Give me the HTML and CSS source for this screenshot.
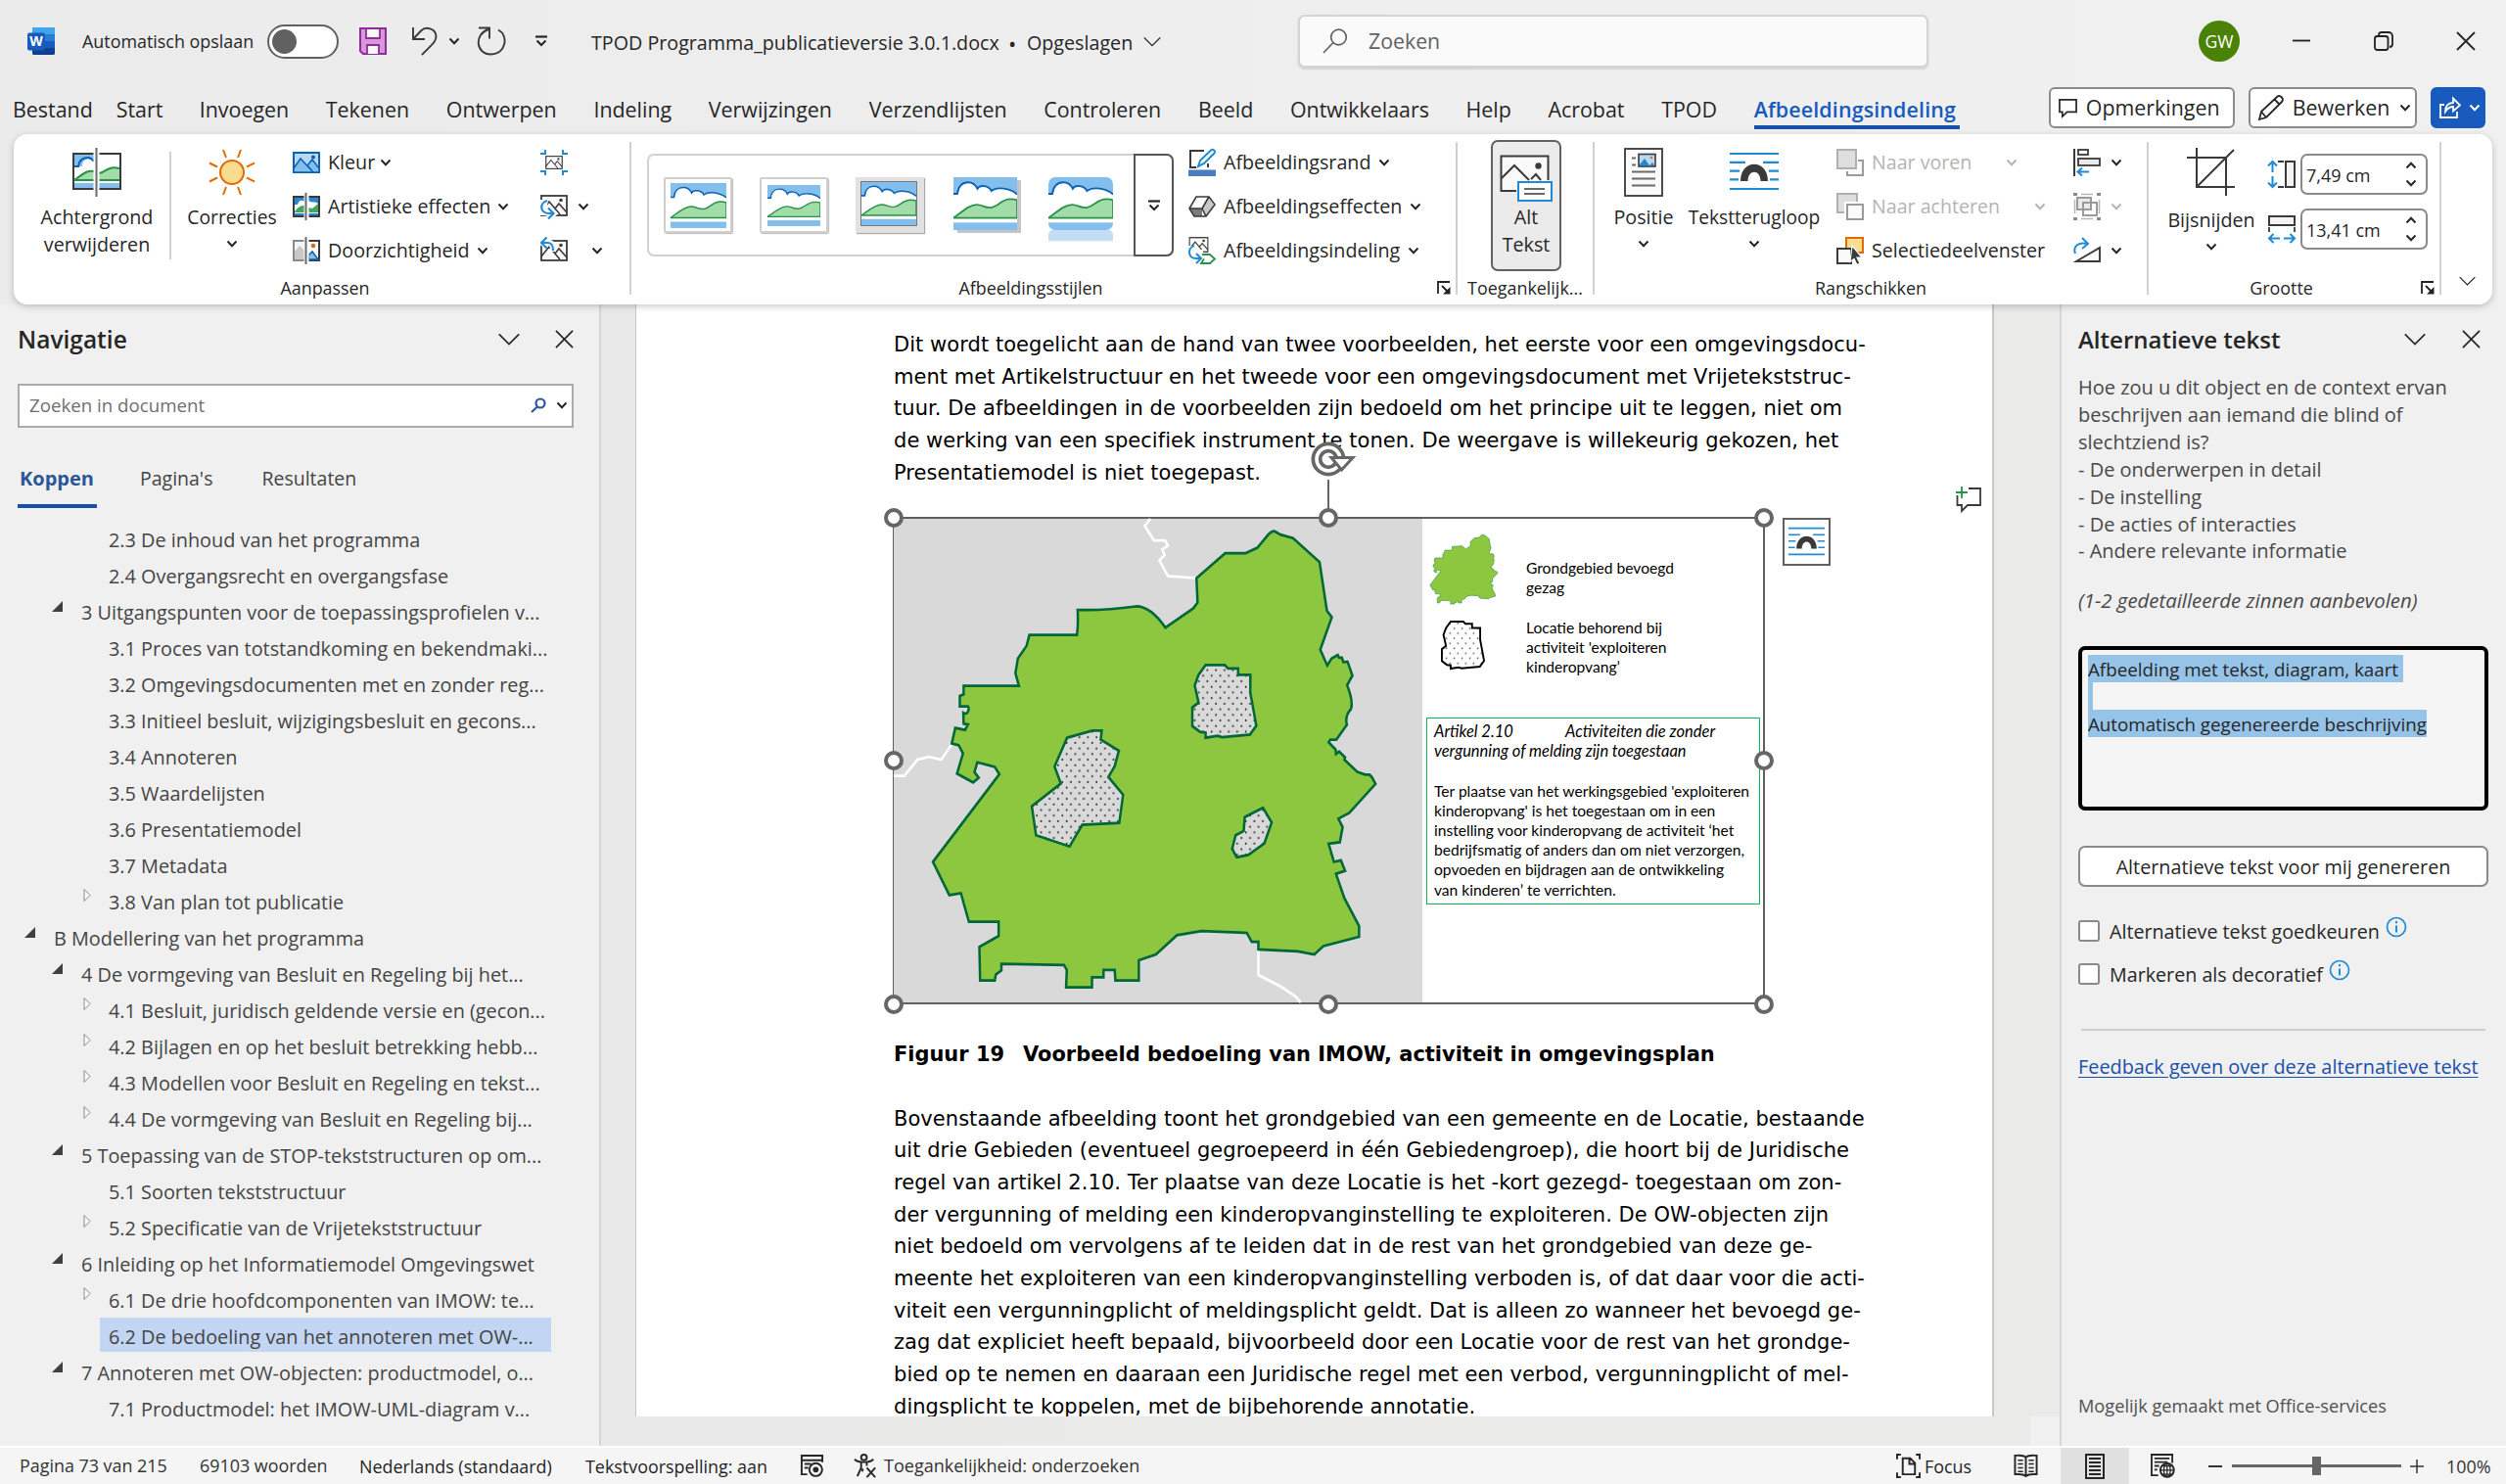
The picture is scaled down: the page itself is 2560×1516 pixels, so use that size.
FILE: index.html
```html
<!DOCTYPE html>
<html lang="nl">
<head>
<meta charset="utf-8">
<title>TPOD Programma_publicatieversie 3.0.1.docx - Word</title>
<link rel="stylesheet" href="styles.css">
</head>
<body>
<svg class="defs" aria-hidden="true">
  <defs>
    <pattern id="dots" width="24.4" height="29" patternUnits="userSpaceOnUse"><rect width="24.4" height="29" fill="#d9d9d9"/><circle cx="6" cy="7" r="2.5" fill="#222"/><circle cx="18.2" cy="21.5" r="2.5" fill="#222"/></pattern>
    <pattern id="dots-light" width="34" height="40" patternUnits="userSpaceOnUse"><rect width="34" height="40" fill="#fff"/><circle cx="8" cy="10" r="3.4" fill="#555"/><circle cx="25" cy="30" r="3.4" fill="#555"/></pattern>
  </defs>
  <symbol id="chev" viewBox="0 0 12 8"><path d="M1.5 1.5 6 6.2l4.500-4.700" fill="none" stroke="currentColor" stroke-width="2"/></symbol>
  <symbol id="chev-lg" viewBox="0 0 24 14"><path d="M1 1.500 12 12.500 23 1.500" fill="none" stroke="currentColor" stroke-width="1.800"/></symbol>
  <symbol id="cross" viewBox="0 0 20 20"><path d="M1 1 19 19M19 1 1 19" fill="none" stroke="currentColor" stroke-width="1.800"/></symbol>
  <symbol id="more" viewBox="0 0 14 12"><path d="M1 1.500h12" stroke="currentColor" stroke-width="2.200"/><path d="M2.500 5.500 7 10l4.500-4.500" fill="none" stroke="currentColor" stroke-width="2"/></symbol>
  <symbol id="launcher" viewBox="0 0 14 14"><path d="M1 13V1h12M5 5l7 7" fill="none" stroke="#222" stroke-width="1.800"/><path d="M13.500 6v7.500H6z" fill="#222"/></symbol>
  <symbol id="scene" viewBox="0 0 57 46" preserveAspectRatio="none">
    <rect width="57" height="46" fill="#fff"/>
    <path d="M0 0h57v15c-6-5.500-18-7-23-3-2.500-5-10.500-5.500-12.500-2C20 7 17.500 4.500 13 4.500 8 4.500 4 8 3.500 14.500H0z" fill="#83beec"/>
    <path d="M0 14.500h3.500C4 8 8 4.500 13 4.500c4.500 0 7 2.500 8.500 5.500 2-3.500 10-3 12.500 2 5-4 17-2.500 23 3" fill="none" stroke="#0b62b4" stroke-width="1.600"/>
    <path d="M0 35.500C8 30 14 24 21 24c5 0 7 3 13 2.500C41 25 43 19 51 19c3 0 5 .5 6 1v15.500z" fill="#a2dda9" stroke="#2a9246" stroke-width="1.500"/>
    <rect y="39.500" width="57" height="6.500" fill="#83beec"/>
  </symbol>
  <symbol id="wrap" viewBox="0 0 50 40"><g stroke="#1e8bd4" stroke-width="2.200" fill="none"><path d="M0 2h50M0 38h50M0 10.800h16M34 10.800h16M0 19.600h10M40 19.600h10M0 28.400h9M41 28.400h9"/></g><path d="M11 30c0-23 28-23 28 0h-7.500c0-12.500-13-12.500-13 0z" fill="#3a3a3a"/></symbol>
  <symbol id="mountain" viewBox="0 0 28 22"><rect x="1" y="1" width="26" height="20" fill="#fafafa" stroke="#3a3a3a" stroke-width="1.800"/><path d="M1 17 9 7l11 13M15 14l4-5 8 9" fill="none" stroke="#3a3a3a" stroke-width="1.600"/><circle cx="21" cy="5.500" r="1.800" fill="#3a3a3a"/></symbol>
  <symbol id="info" viewBox="0 0 22 22"><circle cx="11" cy="11" r="9.500" fill="none" stroke="#1e8bd4" stroke-width="1.700"/><path d="M11 9.500v7M11 5v2.200" stroke="#1e8bd4" stroke-width="2"/></symbol>
  <symbol id="closed" viewBox="0 0 8 15"><path d="M1 1.500v12l6-6z" fill="#fafafa" stroke="#8a8a8a"/></symbol>
  <symbol id="open" viewBox="0 0 11 11"><path d="M11 0v11H0z" fill="#404040"/></symbol>
  <path id="area" d="M1127 257 1142 265 1178 274 1254 336 1275 462 1289 479 1256 563 1276 604 1288 586 1306 577 1310 584 1318 584 1322 595 1334 594 1348 630 1333 655Q1352 700 1343 718 1326 735 1332 758L1302 796H1285L1280 803 1300 822 1301 833 1310 827 1327 842 1325 848 1362 880 1385 887H1397L1404 894 1414 911 1339 986 1308 1001 1320 1023 1312 1062 1280 1066 1295 1113 1315 1109 1327 1136 1301 1144 1325 1207 1367 1279V1307L1265 1331 1239 1353 1192 1345 1079 1340V1320H1060L1046 1297 916 1292 846 1303 786 1353 737 1368V1420H670L668 1393H636V1412H603V1438H529L531 1393 523 1380 344 1377V1394L328 1405 325 1420H283L281 1333 336 1305V1268H251L228 1194 195 1199 148 1113 338 886 325 867 275 855 267 880 279 895 263 907 217 884 234 832 222 811 202 806 212 766 240 771 248 757 236 755 235 727C250 735 253 712 248 710H225V683L236 679V657H394L384 624 391 586 416 553 424 525H560Q564 500 562 460 640 462 728 451 770 450 813 506L893 456 905 441 902 378 984 313H1043L1076 299 1108 264Q1120 254 1127 257Z"/>
  <path id="location" d="M928 603H983L992 612H1021V628H1056V675L1073 760 1055 783 975 790 963 786 928 791V778L912 776 890 761V713L908 700 897 656 908 628Z"/>
</svg>

<header class="titlebar">
  <svg class="word-logo" viewBox="0 0 28 28"><rect x="5" width="23" height="28" rx="2" fill="#185abd"/><path d="M5 7V2a2 2 0 0 1 2-2h19a2 2 0 0 1 2 2v5z" fill="#41a5ee"/><path d="M5 7h23v7H5z" fill="#2b7cd3"/><path d="M5 21h23v5a2 2 0 0 1-2 2H7a2 2 0 0 1-2-2z" fill="#103f91"/><rect y="5.500" width="18" height="18" rx="2" fill="#185abd"/><text x="9" y="19" text-anchor="middle" class="word-letter">W</text></svg>
  <span class="autosave">Automatisch opslaan</span>
  <span class="toggle"><i></i></span>
  <svg class="save" viewBox="0 0 28 28"><path d="M1 1h26v26H4l-3-3z" fill="#d897db" stroke="#8f2c9c" stroke-width="2"/><path d="M7 1h14v10H7zM8 27v-9h12v9" fill="#fafafa" stroke="#8f2c9c" stroke-width="1.800"/></svg>
  <svg class="undo" viewBox="0 0 28 30"><path d="M2 1v12h12M2.500 12.500 10 4.500C15-.5 25 2 25.500 10c0 6-4 8-14.500 19" fill="none" stroke="#3a3a3a" stroke-width="1.900"/></svg>
  <svg class="chev undo-more"><use href="#chev"/></svg>
  <svg class="redo" viewBox="0 0 30 30"><path d="M2 1.500h11v11M12 3C-3 8-1 28.500 14.500 28.500 30 28.500 33 9 22 3.500" fill="none" stroke="#3a3a3a" stroke-width="1.900"/></svg>
  <svg class="customize"><use href="#more"/></svg>
  <span class="doc-name">TPOD Programma_publicatieversie 3.0.1.docx</span>
  <span class="bullet">•</span>
  <span class="doc-state">Opgeslagen</span>
  <svg class="state-chev"><use href="#chev-lg"/></svg>
  <div class="search"><svg viewBox="0 0 26 26"><circle cx="16.500" cy="9" r="7.800"/><path d="M11 14.500 1 25"/></svg>Zoeken</div>
  <span class="avatar">GW</span>
  <svg class="win min" viewBox="0 0 20 20"><path d="M1 9.500h18"/></svg>
  <svg class="win max" viewBox="0 0 20 20"><rect x="1" y="5" width="13.500" height="14" rx="2.500"/><path d="M5 5V4a3 3 0 0 1 3-3h7a4 4 0 0 1 4 4v8a3 3 0 0 1-3 3"/></svg>
  <svg class="win"><use href="#cross"/></svg>
</header>

<nav class="tabs">
  <span>Bestand</span><span class="start">Start</span>
  <div class="tab-list"><span>Invoegen</span><span>Tekenen</span><span>Ontwerpen</span><span>Indeling</span><span>Verwijzingen</span><span>Verzendlijsten</span><span>Controleren</span><span>Beeld</span><span>Ontwikkelaars</span><span>Help</span><span>Acrobat</span><span>TPOD</span><span class="active">Afbeeldingsindeling</span></div>
  <span class="btn comments"><svg viewBox="0 0 20 20"><path d="M1 1h18v13H9l-5 5v-5H1z"/></svg>Opmerkingen</span>
  <span class="btn edit"><svg viewBox="0 0 28 28"><path d="M2 26 4 18 20 3c3-3 8 2 5 5L9 24zM4 18l5 6M17.500 5.500l5 5"/></svg>Bewerken<svg class="chev"><use href="#chev"/></svg></span>
  <span class="btn share"><svg viewBox="0 0 22 22"><path d="M5 8H1v13h17v-6M6 15c0-6 3-9 8-9V1.500L21 8.500l-7 6V10c-4 0-6 2-8 5z"/></svg><svg class="chev"><use href="#chev"/></svg></span>
</nav>

<section class="ribbon">
  <div class="group g-adjust">
    <div class="group-body">
      <div class="big remove-bg"><svg viewBox="0 0 50 50"><rect x="1" y="6" width="48" height="36" fill="#fff" stroke="#3a3a3a" stroke-width="2"/><path d="M2 7h21v8c-5-6-13-4-13 4H2zM2 36h46v5H2z" fill="#83beec"/><path d="M2 19h4c1-9 11-12 16-5" fill="none" stroke="#0b62b4" stroke-width="2"/><path d="M2 33C14 24 16 23 23 24v9zM27 26c7-1 9-6 21-5v12H27z" fill="#a2dda9"/><path d="M2 33C14 24 16 23 23 24M2 33h46M27 26c7-1 9-8 21-5" fill="none" stroke="#2a9246" stroke-width="2"/><path d="M24.500 0v50" stroke="#fff" stroke-width="6"/><path d="M24.500 0v50" stroke="#6a6a6a" stroke-width="2"/></svg>Achtergrond<br>verwijderen</div>
      <i class="inner-sep"></i>
      <div class="big corrections"><svg viewBox="0 0 50 50"><circle cx="25" cy="25" r="12" fill="#f9dc8f" stroke="#e06c00" stroke-width="2"/><path d="M16 2l3 8M34 2l-3 8M16 48l3-8M34 48l-3-8M2 15.500l8 4M48 15.500l-8 4M2 34.500l8-4M48 34.500l-8-4" stroke="#e06c00" stroke-width="2"/></svg>Correcties<svg class="chev"><use href="#chev"/></svg></div>
      <div class="rows adjust-rows">
        <div><svg class="ic" viewBox="0 0 28 28"><rect x="1" y="4" width="26" height="20" fill="#b9d8f3" stroke="#0b62b4" stroke-width="2"/><path d="M1 20 8 10l13 14H1zM15 17l5-6 7 9v4h-6z" fill="#83beec" stroke="#0b62b4" stroke-width="1.500"/><circle cx="21" cy="8.500" r="2" fill="#0b62b4"/></svg>Kleur<svg class="chev"><use href="#chev"/></svg></div>
        <div><svg class="ic" viewBox="0 0 28 28"><rect x="1" y="4" width="26" height="20" fill="#fff" stroke="#3a3a3a" stroke-width="2"/><path d="M2 5h10v4c-4-3-6 0-7 3H2zM16 5h10v6c-3-3-6 0-10-3zM2 21h24v2H2z" fill="#2a86d1"/><path d="M2 19c4-5 6-6 10-6v7H2zM16 15l4 1 6-5v9H16z" fill="#3fa85b"/><path d="M14 0v28" stroke="#fff" stroke-width="5"/><path d="M13.500 0v28" stroke="#6a6a6a" stroke-width="2"/></svg>Artistieke effecten<svg class="chev"><use href="#chev"/></svg></div>
        <div><svg class="ic" viewBox="0 0 28 28"><path d="M1 4h12v20H1z" fill="#f3f3f3" stroke="#8a8a8a" stroke-width="2"/><path d="M2 15 7 9l6 6v8H2z" fill="#c8c8c8"/><path d="M14 4h13v20H14z" fill="#fff" stroke="#3a3a3a" stroke-width="2"/><circle cx="21" cy="9" r="2.300" fill="#e06c00"/><path d="M16 19l4-4 6 8H16z" fill="#83beec" stroke="#0b62b4" stroke-width="1.500"/><path d="M14 0v28" stroke="#fff" stroke-width="5"/><path d="M13.500 0v28" stroke="#6a6a6a" stroke-width="2"/></svg>Doorzichtigheid<svg class="chev"><use href="#chev"/></svg></div>
      </div>
      <div class="rows">
        <div><svg class="ic" viewBox="0 0 28 28"><svg x="5" y="7" width="18" height="14" viewBox="0 0 28 22"><use href="#mountain"/></svg><path d="M5 1v4H0M23 1v4h5M5 27v-4H0M23 27v-4h5" fill="none" stroke="#1e8bd4" stroke-width="2"/></svg></div>
        <div><svg class="ic" viewBox="0 0 28 28"><svg y="2" width="28" height="22" viewBox="0 0 28 22"><use href="#mountain"/></svg><path d="M0 7h7v16H0z" fill="#fff"/><path d="M7 8C-1 10-1 21 9 21h4M8 15l6 6-6 6" fill="none" stroke="#fff" stroke-width="6"/><path d="M7 8C-1 10-1 21 9 21h4M8 15.500l5.500 5.500L8 26.500" fill="none" stroke="#1e8bd4" stroke-width="2.200"/></svg><svg class="chev"><use href="#chev"/></svg></div>
        <div class="reset"><svg class="ic" viewBox="0 0 28 28"><svg y="3" width="28" height="22" viewBox="0 0 28 22"><use href="#mountain"/></svg><path d="M0 5h6c7 0 7 5 7 10M6 0 1 5l5 5" fill="none" stroke="#fff" stroke-width="6"/><path d="M1 6h6c6 0 6 5 6 8M6.500.5 1 6l5.500 5.500" fill="none" stroke="#1e8bd4" stroke-width="2.200"/></svg><svg class="chev"><use href="#chev"/></svg></div>
      </div>
    </div>
    <div class="group-label"><span>Aanpassen</span></div>
  </div>
  <i class="sep"></i>
  <div class="group g-styles">
    <div class="group-body">
      <div class="gallery">
        <div class="thumbs">
          <span class="thumb framed"><svg><use href="#scene"/></svg></span>
          <span class="thumb framed matte"><svg><use href="#scene"/></svg></span>
          <span class="thumb metal"><svg><use href="#scene"/></svg></span>
          <span class="thumb shadow"><svg><use href="#scene"/></svg></span>
          <span class="thumb mirror"><svg><use href="#scene"/></svg></span>
        </div>
        <span class="gallery-more"><svg><use href="#more"/></svg></span>
      </div>
      <div class="rows style-rows">
        <div><svg class="ic" viewBox="0 0 28 28"><path d="M16 2H2v17h6M20 15v4" fill="none" stroke="#3a3a3a" stroke-width="2"/><path d="M10 18l2-6L23 1.500c2-2 5 1 3.500 3L16 15z" fill="#fafafa" stroke="#1e8bd4" stroke-width="2"/><rect y="21.500" width="28" height="6.500" fill="#4a7dbf"/></svg>Afbeeldingsrand<svg class="chev"><use href="#chev"/></svg></div>
        <div><svg class="ic" viewBox="0 0 28 28"><path d="M8 4h12l-6 12H2z" fill="#fafafa"/><path d="M2 16h12v8H6z" fill="#7a7a7a"/><path d="M20 4l6 9-9 11-3-8z" fill="#c8c8c8"/><path d="M8 4h13l6 8-9 12H6l-5-8zM1 16h13l4 8M14 16l7-12" fill="none" stroke="#3a3a3a" stroke-width="1.600"/></svg>Afbeeldingseffecten<svg class="chev"><use href="#chev"/></svg></div>
        <div><svg class="ic" viewBox="0 0 28 28"><svg y="0" width="21" height="16" viewBox="0 0 28 22"><use href="#mountain"/></svg><path d="M0 9h7v14H0zM5 13h10v14H5z" fill="#fff"/><path d="M6 9C-1 11-1 22 8 22h4M8 17l5 5-5 5" fill="none" stroke="#1e8bd4" stroke-width="2"/><path d="M14 18h8l5 4.500-5 4.500h-9l3-4.500" fill="#fff" stroke="#2a9246" stroke-width="1.800"/></svg>Afbeeldingsindeling<svg class="chev"><use href="#chev"/></svg></div>
      </div>
    </div>
    <div class="group-label"><span>Afbeeldingsstijlen</span><svg class="launcher"><use href="#launcher"/></svg></div>
  </div>
  <i class="sep"></i>
  <div class="group g-access">
    <div class="group-body">
      <div class="big alt"><svg viewBox="0 0 54 50"><path d="M17 37H1.500V1.500h48V26" fill="#fafafa" stroke="#3a3a3a" stroke-width="2"/><path d="M2 24l13-13 15 15M32 25l5-5 5 6" fill="none" stroke="#3a3a3a" stroke-width="2"/><circle cx="39.500" cy="11.500" r="3.200" fill="#3a3a3a"/><rect x="19" y="28" width="34" height="19" fill="#fff" stroke="#1e8bd4" stroke-width="2"/><path d="M25 35h21M25 40h21" stroke="#6a6a6a" stroke-width="1.800"/></svg>Alt<br>Tekst</div>
    </div>
    <div class="group-label"><span>Toegankelijk...</span></div>
  </div>
  <i class="sep"></i>
  <div class="group g-arrange">
    <div class="group-body">
      <div class="big position"><svg viewBox="0 0 50 50"><rect x="6" y="1" width="38" height="48" fill="#fafafa" stroke="#3a3a3a" stroke-width="1.800"/><path d="M13 10.500h4M13 17.500h4M13 24.500h24M13 31.500h24M13 38.500h24" stroke="#6a6a6a" stroke-width="1.800"/><rect x="20" y="6.500" width="17" height="12.500" fill="#b9d8f3" stroke="#3a3a3a" stroke-width="1.600"/><path d="M21 17l5-6 5 7 3-3 2 3H21z" fill="#1e8bd4"/><circle cx="33" cy="10" r="1.200" fill="#e06c00"/></svg>Positie<svg class="chev"><use href="#chev"/></svg></div>
      <div class="big wrapping"><svg viewBox="0 0 50 50"><svg y="4" width="50" height="40"><use href="#wrap"/></svg></svg>Tekstterugloop<svg class="chev"><use href="#chev"/></svg></div>
      <div class="rows order-rows">
        <div class="off"><svg class="ic" viewBox="0 0 28 28"><path d="M11 23v4h16V12h-5" fill="#fafafa" stroke="#9a9a9a" stroke-width="2"/><rect x="1" y="1" width="19" height="19" fill="#dedede" stroke="#b0b0b0" stroke-width="2"/></svg>Naar voren<svg class="chev"><use href="#chev"/></svg></div>
        <div class="off"><svg class="ic" viewBox="0 0 28 28"><rect x="1" y="1" width="20" height="19" fill="#dedede" stroke="#b0b0b0" stroke-width="2"/><rect x="8" y="9" width="20" height="19" fill="#fff"/><rect x="11" y="12" width="16" height="15" fill="#fafafa" stroke="#9a9a9a" stroke-width="2"/></svg>Naar achteren<svg class="chev"><use href="#chev"/></svg></div>
        <div><svg class="ic" viewBox="0 0 28 28"><rect x="10" y="1" width="17" height="15" fill="#f9dc8f" stroke="#e06c00" stroke-width="2"/><rect x="1" y="12" width="14" height="15" fill="#fafafa" stroke="#3a3a3a" stroke-width="2"/><path d="M16 9l10 12h-5l3 6-3 1.500-3-6-4 3z" fill="#3a3a3a" stroke="#fff" stroke-width="1.200"/></svg>Selectiedeelvenster</div>
      </div>
      <div class="rows icon-rows">
        <div><svg class="ic" viewBox="0 0 28 28"><path d="M1 0v28" stroke="#3a3a3a" stroke-width="2"/><rect x="5" y="1" width="10" height="5" fill="#fafafa" stroke="#3a3a3a" stroke-width="1.800"/><rect x="5" y="10" width="22" height="7" fill="#eaeaea" stroke="#3a3a3a" stroke-width="1.800"/><path d="M16 23.500H5M9 19.500l-4.500 4 4.500 4" fill="none" stroke="#1e8bd4" stroke-width="2"/></svg><svg class="chev"><use href="#chev"/></svg></div>
        <div class="off"><svg class="ic" viewBox="0 0 28 28"><path d="M0 1.500h4M24 1.500h4M0 26.500h4M24 26.500h4" stroke="#8a8a8a" stroke-width="3"/><path d="M8 1.500h12M8 26.500h12M1.500 7v14M26.500 7v14" stroke="#b8b8b8" stroke-width="1.500"/><rect x="4" y="5" width="14" height="12" fill="#eaeaea" stroke="#9a9a9a" stroke-width="2"/><rect x="10" y="10" width="14" height="13" fill="none" stroke="#9a9a9a" stroke-width="2"/></svg><svg class="chev"><use href="#chev"/></svg></div>
        <div><svg class="ic" viewBox="0 0 28 28"><path d="M27 11v14H3z" fill="#fafafa" stroke="#3a3a3a" stroke-width="1.900"/><path d="M2 17C-1 9 6 5 14 7M9 1l6 6-6 5" fill="none" stroke="#1e8bd4" stroke-width="2"/></svg><svg class="chev"><use href="#chev"/></svg></div>
      </div>
    </div>
    <div class="group-label"><span>Rangschikken</span></div>
  </div>
  <i class="sep"></i>
  <div class="group g-size">
    <div class="group-body">
      <div class="big crop"><svg viewBox="0 0 50 50"><path d="M10 0v40h39M0 10h40v39M10 40 48 2" fill="none" stroke="#3a3a3a" stroke-width="2"/></svg><span>Bijsnijden</span><svg class="chev"><use href="#chev"/></svg></div>
      <div class="fields">
        <div><svg class="ic" viewBox="0 0 28 28"><path d="M4.500 1v11M4.500 16v11M0 5.500 4.500 1 9 5.500M0 22.500 4.500 27 9 22.500" fill="none" stroke="#1e8bd4" stroke-width="2"/><rect x="18" y="1" width="9" height="26" fill="#f3f3f3" stroke="#3a3a3a" stroke-width="2"/><path d="M10 1h6M10 27h6" stroke="#3a3a3a" stroke-width="1.800"/></svg><span class="field">7,49 cm<b><svg class="chev up"><use href="#chev"/></svg><svg class="chev"><use href="#chev"/></svg></b></span></div>
        <div><svg class="ic" viewBox="0 0 28 28"><rect x="1" y="1" width="26" height="9" fill="#f3f3f3" stroke="#3a3a3a" stroke-width="2"/><path d="M1 12v5M27 12v5" stroke="#3a3a3a" stroke-width="1.800"/><path d="M1 23.500h11M16 23.500h11M5.500 19 1 23.500 5.500 28M22.500 19l4.500 4.500-4.500 4.500" fill="none" stroke="#1e8bd4" stroke-width="2"/></svg><span class="field">13,41 cm<b><svg class="chev up"><use href="#chev"/></svg><svg class="chev"><use href="#chev"/></svg></b></span></div>
      </div>
    </div>
    <div class="group-label"><span>Grootte</span><svg class="launcher"><use href="#launcher"/></svg></div>
  </div>
  <i class="sep"></i>
  <svg class="collapse"><use href="#chev-lg"/></svg>
</section>

<main class="workspace">
  <aside class="navpane">
    <div class="pane-head"><h2>Navigatie</h2><svg class="pane-chev"><use href="#chev-lg"/></svg><svg class="pane-close"><use href="#cross"/></svg></div>
    <div class="nav-search"><span>Zoeken in document</span><svg class="mag" viewBox="0 0 16 16"><circle cx="10" cy="6" r="4.500"/><path d="M7 9.500 1 15"/></svg><svg class="chev"><use href="#chev"/></svg></div>
    <div class="nav-tabs"><span class="active">Koppen</span><span>Pagina's</span><span>Resultaten</span></div>
    <ul class="tree">
      <li class="l3">2.3 De inhoud van het programma</li>
      <li class="l3">2.4 Overgangsrecht en overgangsfase</li>
      <li class="l2"><svg class="open"><use href="#open"/></svg>3 Uitgangspunten voor de toepassingsprofielen v...</li>
      <li class="l3">3.1 Proces van totstandkoming en bekendmaki...</li>
      <li class="l3">3.2 Omgevingsdocumenten met en zonder reg...</li>
      <li class="l3">3.3 Initieel besluit, wijzigingsbesluit en gecons...</li>
      <li class="l3">3.4 Annoteren</li>
      <li class="l3">3.5 Waardelijsten</li>
      <li class="l3">3.6 Presentatiemodel</li>
      <li class="l3">3.7 Metadata</li>
      <li class="l3"><svg class="closed"><use href="#closed"/></svg>3.8 Van plan tot publicatie</li>
      <li class="l1"><svg class="open"><use href="#open"/></svg>B Modellering van het programma</li>
      <li class="l2"><svg class="open"><use href="#open"/></svg>4 De vormgeving van Besluit en Regeling bij het...</li>
      <li class="l3"><svg class="closed"><use href="#closed"/></svg>4.1 Besluit, juridisch geldende versie en (gecon...</li>
      <li class="l3"><svg class="closed"><use href="#closed"/></svg>4.2 Bijlagen en op het besluit betrekking hebb...</li>
      <li class="l3"><svg class="closed"><use href="#closed"/></svg>4.3 Modellen voor Besluit en Regeling en tekst...</li>
      <li class="l3"><svg class="closed"><use href="#closed"/></svg>4.4 De vormgeving van Besluit en Regeling bij...</li>
      <li class="l2"><svg class="open"><use href="#open"/></svg>5 Toepassing van de STOP-tekststructuren op om...</li>
      <li class="l3">5.1 Soorten tekststructuur</li>
      <li class="l3"><svg class="closed"><use href="#closed"/></svg>5.2 Specificatie van de Vrijetekststructuur</li>
      <li class="l2"><svg class="open"><use href="#open"/></svg>6 Inleiding op het Informatiemodel Omgevingswet</li>
      <li class="l3"><svg class="closed"><use href="#closed"/></svg>6.1 De drie hoofdcomponenten van IMOW: te...</li>
      <li class="l3 selected">6.2 De bedoeling van het annoteren met OW-...</li>
      <li class="l2"><svg class="open"><use href="#open"/></svg>7 Annoteren met OW-objecten: productmodel, o...</li>
      <li class="l3">7.1 Productmodel: het IMOW-UML-diagram v...</li>
    </ul>
  </aside>

  <div class="canvas">
    <article class="page">
      <p>Dit wordt toegelicht aan de hand van twee voorbeelden, het eerste voor een omgevingsdocu-<br>ment met Artikelstructuur en het tweede voor een omgevingsdocument met Vrijetekststruc-<br>tuur. De afbeeldingen in de voorbeelden zijn bedoeld om het principe uit te leggen, niet om<br>de werking van een specifiek instrument te tonen. De weergave is willekeurig gekozen, het<br>Presentatiemodel is niet toegepast.</p>
      <figure class="figure">
        <svg class="map" viewBox="36 224 1512 1253" preserveAspectRatio="none">
          <rect x="36" y="224" width="1512" height="1253" fill="#d9d9d9"/>
          <g class="roads"><path d="M770 224 754 242 780 280H812L820 294 804 303 811 318 796 332 820 372 902 378"/><path d="M36 890H66L104 848 137 841 172 848 202 808"/><path d="M1079 1340V1406L1143 1436 1184 1461 1200 1477"/></g>
          <use class="area" href="#area"/>
          <use class="spot" href="#location"/>
          <path class="spot" d="M532 791 604 773H631L628 796 680 825 668 865 650 893 692 939 681 1012 575 1017 539 1073 443 1044 431 969 514 910 496 866Z"/>
          <path class="spot" d="M1092 973 1117 1011 1096 1065 1050 1095 1017 1101 1004 1079 1014 1044 1037 1033 1040 997Z"/>
        </svg>
        <div class="legend">
          <div class="legend-row"><svg class="mini-area" viewBox="148 257 1266 1181" preserveAspectRatio="none"><use href="#area"/></svg><span>Grondgebied bevoegd<br>gezag</span></div>
          <div class="legend-row second"><svg class="mini-spot" viewBox="886 599 191 196" preserveAspectRatio="none"><use href="#location"/></svg><span>Locatie behorend bij<br>activiteit 'exploiteren<br>kinderopvang’</span></div>
          <div class="rule"><em><span class="art">Artikel 2.10</span>Activiteiten die zonder<br>vergunning of melding zijn toegestaan</em><br><br>Ter plaatse van het werkingsgebied 'exploiteren<br>kinderopvang' is het toegestaan om in een<br>instelling voor kinderopvang de activiteit ‘het<br>bedrijfsmatig of anders dan om niet verzorgen,<br>opvoeden en bijdragen aan de ontwikkeling<br>van kinderen’ te verrichten.</div>
        </div>
        <i class="stem"></i>
        <svg class="rotate" viewBox="0 0 46 36"><circle cx="19" cy="17" r="12" fill="none" stroke="#666" stroke-width="11"/><circle cx="19" cy="17" r="12" fill="none" stroke="#fff" stroke-width="3.600"/><path d="M22 15.500h22L32.500 28z" fill="#fff" stroke="#666" stroke-width="3"/></svg>
        <i class="handle tl"></i><i class="handle tc"></i><i class="handle tr"></i><i class="handle ml"></i><i class="handle mr"></i><i class="handle bl"></i><i class="handle bc"></i><i class="handle br"></i>
        <span class="layout-btn"><svg><use href="#wrap"/></svg></span>
        <svg class="add-comment" viewBox="0 0 26 26"><path d="M13 2h12v17H12l-6 6v-6H1.500V9" fill="none" stroke="#3a3a3a" stroke-width="1.800"/><path d="M6 0v12M0 6h12" stroke="#2a9246" stroke-width="1.800"/></svg>
      </figure>
      <h3><span>Figuur 19</span>Voorbeeld bedoeling van IMOW, activiteit in omgevingsplan</h3>
      <p class="after">Bovenstaande afbeelding toont het grondgebied van een gemeente en de Locatie, bestaande<br>uit drie Gebieden (eventueel gegroepeerd in één Gebiedengroep), die hoort bij de Juridische<br>regel van artikel 2.10. Ter plaatse van deze Locatie is het -kort gezegd- toegestaan om zon-<br>der vergunning of melding een kinderopvanginstelling te exploiteren. De OW-objecten zijn<br>niet bedoeld om vervolgens af te leiden dat in de rest van het grondgebied van deze ge-<br>meente het exploiteren van een kinderopvanginstelling verboden is, of dat daar voor die acti-<br>viteit een vergunningplicht of meldingsplicht geldt. Dat is alleen zo wanneer het bevoegd ge-<br>zag dat expliciet heeft bepaald, bijvoorbeeld door een Locatie voor de rest van het grondge-<br>bied op te nemen en daaraan een Juridische regel met een verbod, vergunningplicht of mel-<br>dingsplicht te koppelen, met de bijbehorende annotatie.</p>
    </article>
    <i class="corner"></i>
  </div>

  <aside class="altpane">
    <div class="pane-head"><h2>Alternatieve tekst</h2><svg class="pane-chev"><use href="#chev-lg"/></svg><svg class="pane-close"><use href="#cross"/></svg></div>
    <p class="question">Hoe zou u dit object en de context ervan<br>beschrijven aan iemand die blind of<br>slechtziend is?<br>- De onderwerpen in detail<br>- De instelling<br>- De acties of interacties<br>- Andere relevante informatie</p>
    <p class="hint">(1-2 gedetailleerde zinnen aanbevolen)</p>
    <div class="alt-box"><mark>Afbeelding met tekst, diagram, kaart&nbsp;</mark><mark class="blank"></mark><mark>Automatisch gegenereerde beschrijving</mark></div>
    <div class="generate">Alternatieve tekst voor mij genereren</div>
    <div class="check"><i></i>Alternatieve tekst goedkeuren<svg><use href="#info"/></svg></div>
    <div class="check"><i></i>Markeren als decoratief<svg><use href="#info"/></svg></div>
    <hr>
    <a class="feedback">Feedback geven over deze alternatieve tekst</a>
    <div class="powered">Mogelijk gemaakt met Office-services</div>
  </aside>
</main>

<footer class="status">
  <span class="s-page">Pagina 73 van 215</span>
  <span class="s-words">69103 woorden</span>
  <span class="s-lang">Nederlands (standaard)</span>
  <span class="s-pred">Tekstvoorspelling: aan</span>
  <svg class="s-icon s-macro" viewBox="0 0 26 26"><path d="M8 22H2V2h22v7M2 7h22M5 11h7M5 15h4" fill="none" stroke="#262626" stroke-width="2"/><circle cx="17" cy="17" r="6.800" fill="none" stroke="#262626" stroke-width="2"/><circle cx="17" cy="17" r="3" fill="#262626"/></svg>
  <svg class="s-icon s-access" viewBox="0 0 26 26"><circle cx="11" cy="4" r="3" fill="none" stroke="#262626" stroke-width="2"/><path d="M1 6c4 4 16 4 20 0M8 9v6l-4 9M14 9v4M10 16l-1 3M14 15l9 10M23 15l-9 10" fill="none" stroke="#262626" stroke-width="2"/></svg>
  <span class="s-check">Toegankelijkheid: onderzoeken</span>
  <svg class="s-icon s-focus" viewBox="0 0 26 26"><path d="M5 1H1v5M21 1h4v5M5 25H1v-5M21 25h4v-5M7 5h8l5 5v12H7zM14 5v6h6" fill="none" stroke="#262626" stroke-width="2"/></svg>
  <span class="s-focus-label">Focus</span>
  <svg class="s-icon s-read" viewBox="0 0 26 26"><path d="M13 4C10 1 5 2 1.500 2v20c4 0 8-1 11.500 2 3.500-3 7.500-2 11.500-2V2C21 2 16 1 13 4zM13 4v19" fill="none" stroke="#262626" stroke-width="2"/><path d="M4.500 7H10M4.500 11H10M4.500 15H10M4.500 19H10M16 7h5.500M16 11h5.500M16 15h5.500M16 19h5.500" stroke="#262626" stroke-width="1.600"/></svg>
  <span class="s-print"><svg viewBox="0 0 20 26"><rect x="1" y="1" width="18" height="24" fill="none" stroke="#262626" stroke-width="2"/><path d="M4 5h12M4 9h12M4 13h12M4 17h12M4 21h12" stroke="#262626" stroke-width="1.900"/></svg></span>
  <svg class="s-icon s-web" viewBox="0 0 26 26"><path d="M8 23H1V1h22v9M4 5h16M4 9h14M4 13h5M4 17h3" fill="none" stroke="#262626" stroke-width="1.900"/><circle cx="17.500" cy="17.500" r="7.200" fill="none" stroke="#262626" stroke-width="2"/><path d="M10 17.500h15M17.500 10v15M12 13h11M12 22h11" stroke="#262626" stroke-width="1.300"/><ellipse cx="17.500" cy="17.500" rx="3.500" ry="7.200" fill="none" stroke="#262626" stroke-width="1.300"/></svg>
  <i class="minus"></i>
  <i class="slider"><b></b></i>
  <svg class="plus" viewBox="0 0 14 14"><path d="M7 0v14M0 7h14" stroke="#333" stroke-width="1.500"/></svg>
  <span class="s-zoom">100%</span>
</footer>
</body>
</html>
```
FILE: styles.css
```css
* { box-sizing: border-box; }
body { margin: 0; width: 2560px; height: 1516px; overflow: hidden; display: flex; flex-direction: column; background: linear-gradient(90deg, #ebebeb, #efefef 60%, #f0f0f0); font-family: "Open Sans", "Noto Sans", sans-serif; color: #262626; white-space: nowrap; }
svg { display: block; flex: none; overflow: visible; }
.defs { position: absolute; width: 0; height: 0; }
.chev { width: 12px; height: 8px; }

/* Title bar */
.titlebar { height: 84px; display: flex; align-items: center; padding-left: 28px; font-size: 19.7px; }
.titlebar > * { flex: none; }
.word-logo { width: 28px; height: 28px; }
.word-letter { font: 700 14px "Open Sans", sans-serif; fill: #fff; }
.autosave { font-size: 17.9px; margin-left: 28px; width: 189px; }
.toggle { width: 73px; height: 35px; border: 2px solid #616161; border-radius: 18px; background: #fff; padding: 3px; }
.toggle i { display: block; width: 25px; height: 25px; border-radius: 50%; background: #616161; }
.save { width: 28px; height: 28px; margin-left: 21px; }
.undo { width: 28px; height: 30px; margin-left: 25px; }
.undo-more { margin-left: 10px; }
.redo { width: 30px; height: 30px; margin-left: 17px; }
.customize { width: 14px; height: 12px; margin-left: 29px; }
.doc-name { margin-left: 44px; width: 418px; padding-top: 3px; }
.bullet { margin: 3px 0 0 8px; width: 19px; font-size: 22px; }
.doc-state { width: 112px; padding-top: 3px; }
.state-chev { width: 18px; height: 11px; margin-left: 7px; }
.search { margin-left: 140px; width: 644px; height: 55px; background: #fafafa; border: 2px solid #d4d4d4; border-bottom-width: 3px; border-radius: 7px; box-shadow: 0 1px 2px rgba(0,0,0,.12); display: flex; align-items: center; padding-left: 23px; font-size: 21.3px; color: #616161; }
.search svg { width: 26px; height: 26px; margin-right: 21px; fill: none; stroke: #616161; stroke-width: 1.7; }
.avatar { margin-left: 276px; width: 42px; height: 42px; border-radius: 50%; background: #498205; color: #fff; font-size: 17.5px; line-height: 42px; text-align: center; }
.win { width: 20px; height: 20px; margin-left: 64px; fill: none; stroke: #222; stroke-width: 1.8; }
.min { margin-left: 53px; }

/* Tabs */
.tabs { height: 53px; display: flex; align-items: flex-start; padding: 5px 0 0 13px; font-size: 21.4px; line-height: 45px; }
.tabs > .start { margin-left: 24px; width: 49px; }
.tab-list { margin-left: 36px; width: 1798px; display: flex; justify-content: space-between; }
.tabs .active { font-weight: 600; letter-spacing: .15px; width: 210px; color: #185abd; height: 43px; border-bottom: 4px solid #174fab; }
.btn { height: 42px; border: 2px solid #8a8a8a; border-radius: 6px; background: #fff; display: flex; align-items: center; line-height: 38px; }
.btn svg { fill: none; stroke: #262626; stroke-width: 1.8; }
.comments { margin-left: 91px; width: 190px; padding-left: 8px; gap: 9px; }
.comments > svg { width: 19px; height: 19px; }
.edit { margin-left: 14px; width: 172px; padding-left: 7px; }
.edit > svg:first-child { width: 28px; height: 28px; margin-right: 8px; }
.edit .chev { margin-left: 10px; }
.share { margin-left: 14px; width: 56px; background: #185abd; border-color: #185abd; color: #fff; padding-left: 7px; gap: 8px; }
.share svg { stroke: #fff; width: 22px; height: 22px; }
.share .chev { width: 12px; height: 8px; }

/* Ribbon */
.ribbon { position: relative; z-index: 2; height: 174px; margin: 0 14px; background: #fff; border-radius: 14px; box-shadow: 0 2px 7px rgba(0,0,0,.22); display: flex; font-size: 19.7px; }
.sep { width: 2px; height: 156px; margin-top: 8px; background: #d1d1d1; flex: none; }
.group { display: flex; flex-direction: column; flex: none; }
.g-adjust { width: 629px; }
.g-styles { width: 842px; }
.g-access { width: 138px; }
.g-arrange { width: 564px; }
.g-size { width: 297px; }
.group-body { height: 144px; display: flex; align-items: flex-start; }
.group-label { height: 26px; display: flex; align-items: center; font-size: 17.9px; }
.group-label span { flex: 1; text-align: center; }
.g-adjust .group-label { padding-left: 7px; }
.g-styles .group-label span, .g-size .group-label span { padding-right: 7px; }
.launcher { width: 14px; height: 14px; margin-right: 5px; }
.big { padding-top: 14px; display: flex; flex-direction: column; align-items: center; line-height: 28px; text-align: center; }
.big > svg:first-child { width: 50px; height: 50px; margin-bottom: 7px; }
.big > .chev { margin-top: 9px; }
.remove-bg { display: block; width: 159px; padding-left: 11px; }
.remove-bg > svg:first-child { margin: 0 auto 7px; }
.inner-sep { width: 2px; height: 110px; margin-top: 18px; background: #d1d1d1; }
.corrections { width: 124px; font-size: 19.3px; }
.rows { padding-top: 6px; }
.rows > div { height: 45px; display: flex; align-items: center; }
.ic { width: 28px; height: 28px; margin-right: 8px; }
.rows .chev { margin-left: 7px; }
.adjust-rows { width: 253px; }
.adjust-rows div:first-child .chev { margin-left: 5px; }
.adjust-rows + .rows .chev { margin-left: 2px; }
.adjust-rows + .rows .reset .chev { margin-left: 16px; }
.gallery { margin: 20px 0 0 16px; width: 538px; height: 105px; border: 2px solid #d1d1d1; border-radius: 7px; display: flex; }
.thumbs { flex: 1; display: flex; align-items: center; gap: 28px; padding-left: 15px; }
.thumb { width: 70px; height: 57px; flex: none; }
.thumb svg { width: 57px; height: 46px; }
.framed { border: 2px solid #cfcfcf; padding: 3.500px 4.500px; border-radius: 2px; box-shadow: 1px 1px 1px #bbb; }
.matte { padding: 6px 6px; }
.matte svg { width: 54px; height: 42px; }
.metal { background: #e1e1e1; padding: 5px 6px; box-shadow: 1px 1px 1px #aaa; }
.metal svg { outline: 1px solid #777; width: 56px; height: 44px; }
.shadow { padding-left: 2px; }
.shadow svg { width: 65px; height: 54px; box-shadow: 4px 3px 0 #c4c4c4; }
.mirror { padding-left: 1px; }
.mirror svg { width: 66px; height: 54px; border-radius: 7px; overflow: hidden; }
.mirror::after { content: ""; display: block; width: 66px; height: 12px; background: linear-gradient(#c2ddf5 80%, #edf5fc); border-radius: 5px 5px 0 0; }
.gallery-more { width: 41px; margin: -2px; border: 2px solid #555; border-radius: 0 7px 7px 0; display: flex; align-items: center; justify-content: center; }
.gallery-more svg { width: 14px; height: 12px; }
.style-rows { margin-left: 15px; }
.style-rows .chev { margin-left: 8px; }
.alt { margin: 6px 0 0 34px; width: 72px; height: 134px; padding-top: 13px; border: 2px solid #616161; border-radius: 7px; background: #ebebeb; display: block; }
.alt > svg:first-child { width: 54px; height: 50px; margin: 0 auto; }
.position { width: 100px; }
.wrapping { width: 126px; font-size: 19.2px; }
.order-rows { margin-left: 21px; width: 242px; font-size: 19.6px; }
.rows.order-rows .chev { margin-left: 35px; }
.rows.icon-rows .chev { margin-left: 2px; }
.off { color: #b4b4b4; }
.crop { width: 122px; padding-left: 6px; }
.crop > span { padding-top: 3px; }
.fields { padding-top: 20px; display: flex; flex-direction: column; gap: 14px; }
.fields > div { display: flex; align-items: center; }
.fields .ic { margin-right: 5px; }
.field { width: 130px; height: 42px; border: 2px solid #8a8a8a; border-radius: 7px; background: #fff; padding: 2px 9px 0 4px; display: flex; align-items: center; justify-content: space-between; font-size: 18px; }
.field b { display: flex; flex-direction: column; gap: 10px; margin-top: -2px; }
.up { transform: scaleY(-1); }
.collapse { width: 17px; height: 10px; margin: 145px 0 0 18px; }

/* Workspace */
.workspace { height: 1166px; display: flex; background: #f0f0f0; }
.pane-head { display: flex; align-items: center; height: 70px; }
.pane-head h2 { margin: 0; flex: 1; font-size: 24px; font-weight: 600; line-height: 70px; padding-top: 1px; }
.pane-chev { width: 24px; height: 13px; }
.pane-close { width: 19px; height: 19px; }
.navpane { width: 614px; border-right: 2px solid #d6d6d6; padding: 0 26px 0 18px; color: #444; font-size: 19.85px; }
.navpane .pane-head { color: #262626; }
.navpane h2 { font-size: 24.5px; }
.navpane .pane-close { margin-left: 35px; }
.nav-search { margin-top: 11px; height: 45px; border: 2px solid #ababab; background: #fff; display: flex; align-items: center; padding: 0 4px 2px 10px; font-size: 18.7px; color: #707070; }
.nav-search span { flex: 1; }
.mag { width: 16px; height: 16px; fill: none; stroke: #2b579a; stroke-width: 2.200; }
.nav-search .chev { margin-left: 10px; color: #262626; }
.nav-tabs { margin-top: 35px; height: 47px; display: flex; font-size: 19.5px; line-height: 34px; }
.nav-tabs span { margin-left: 44px; }
.nav-tabs span + span + span { margin-left: 50px; }
.nav-tabs .active { margin: 0; width: 81px; padding-left: 2px; font-size: 20px; font-weight: 700; color: #2b579a; border-bottom: 4px solid #174fab; }
.tree { list-style: none; margin: 12px 0 0; padding: 0; display: flex; flex-direction: column; }
.tree li { flex: none; height: 35px; margin: 1px 0 1px 84px; width: 461px; padding: 4px 0 0 9px; line-height: 31px; display: flex; }
.tree .l2 { margin-left: 56px; }
.tree .l1 { margin-left: 28px; }
.tree .selected { background: #c2d5f2; }
.tree .open { width: 11px; height: 11px; margin: 4px 19px 0 -30px; }
.tree .closed { width: 8px; height: 15px; margin: 1px 18px 0 -26px; }

.canvas { position: relative; width: 1490px; background: linear-gradient(90deg, #e9e9e9, #eaeae8); padding-left: 35px; }
.page { width: 1388px; height: 1136px; overflow: hidden; background: #fff; border: solid #c8c8c8; border-width: 0 2px 0 1px; padding: 25px 0 0 263px; font: 21px/32.66px "DejaVu Sans", sans-serif; color: #000; }
.page p { margin: 0; letter-spacing: .045px; }
.page .after { margin-top: 32.500px; }
.page h3 { margin: 35.500px 0 0; font-size: 20.94px; font-weight: 700; line-height: 32.66px; }
.page h3 span { display: inline-block; width: 132px; }
.corner { position: absolute; right: 0; bottom: 0; width: 30px; height: 30px; background: #f0f0f0; }
.figure { position: relative; margin: 28.700px 0 0 -1px; width: 891px; height: 498px; border: 2px solid #606060; display: flex; }
.map { width: 540px; height: 494px; margin-left: -1px; }
.roads { fill: none; stroke: #fff; }
.area, .roads path, .spot { stroke-width: 7px; }
.area { fill: #8dc63f; stroke: #006838; }
.spot { fill: url(#dots); stroke: #006838; }
.legend { flex: 1; padding: 16px 0 0 5px; font: 15.6px/20.2px Lato, "Open Sans", sans-serif; }
.legend-row { display: flex; padding-left: 3px; height: 88px; }
.legend-row span { width: 200px; margin: 24px 0 0 29px; }
.mini-area { width: 69px; height: 71px; fill: #8dc63f; stroke: #4f9f58; stroke-width: 14px; }
.second { padding-left: 14px; }
.mini-spot { width: 45px; height: 50px; fill: url(#dots-light); stroke: #000; stroke-width: 8px; }
.second span { margin: -3px 0 0 42px; }
.rule { width: 341px; height: 191px; border: 1.500px solid #0fb457; margin: 11px 0 0 -1px; padding: 3px 0 0 7px; }
.rule em { font-size: 16.500px; }
.art { display: inline-block; width: 134px; }
.stem { position: absolute; left: 442px; top: -40px; width: 2px; height: 32px; background: #666; }
.rotate { position: absolute; left: 424px; top: -78px; width: 46px; height: 36px; }
.handle { position: absolute; width: 20px; height: 20px; border: 4px solid #666; border-radius: 50%; background: #fff; }
.tl, .tc, .tr { top: -11px; }
.ml, .mr { top: 237px; }
.bl, .bc, .br { top: 486px; }
.tl, .ml, .bl { left: -11px; }
.tc, .bc { left: 433px; }
.tr, .mr, .br { left: 878px; }
.layout-btn { position: absolute; left: 907px; top: -1px; width: 49px; height: 49px; border: 2px solid #606060; background: #fff; padding: 7px 4px; }
.layout-btn svg { width: 37px; height: 30px; }
.add-comment { position: absolute; left: 1084px; top: -33px; width: 26px; height: 26px; }

/* Alternative text pane */
.altpane { width: 456px; border-left: 2px solid #d6d6d6; padding: 0 18px 0 17px; font-size: 20px; color: #262626; display: flex; flex-direction: column; }
.altpane .pane-close { margin: 0 8px 0 36px; }
.question, .hint { margin: 0; line-height: 27.9px; color: #484848; }
.question { padding-top: 1px; }
.hint { margin-top: 23px; font-style: italic; font-size: 20.35px; }
.alt-box { margin-top: 32px; height: 168px; border: 4px solid #000; border-radius: 7px; background: #f5f5f5; padding: 5px 6px; font-size: 18.75px; line-height: 30px; display: flex; flex-direction: column; align-items: flex-start; }
.alt-box mark { background: #96c3e8; color: inherit; height: 28px; }
.alt-box .blank { width: 5px; }
.generate { margin-top: 36px; height: 42px; border: 2px solid #8a8a8a; border-radius: 7px; background: #fff; text-align: center; font-size: 19.75px; line-height: 40px; }
.check { height: 44px; display: flex; align-items: center; font-size: 19.7px; }
.generate + .check { margin-top: 23px; }
.check i { width: 22px; height: 22px; border: 2px solid #8a8a8a; border-radius: 3px; background: #fff; margin-right: 10px; }
.check svg { width: 22px; height: 22px; margin: -8px 0 0 6px; }
.altpane hr { width: 413px; height: 2px; border: 0; background: #cfcfcf; margin: 34px 0 0 3px; }
.feedback { margin-top: 22px; font-size: 19.85px; line-height: 30px; color: #174fab; text-decoration: underline; text-underline-offset: 3px; }
.powered { margin-top: auto; padding-bottom: 26px; font-size: 18.2px; line-height: 30px; color: #505050; }

/* Status bar */
.status { height: 39px; border-top: 2px solid #fff; background: #f5f5f5; display: flex; align-items: center; padding-left: 20px; font-size: 17.9px; color: #333; }
.status > * { flex: none; }
.s-page { width: 184px; }
.s-words { width: 163px; }
.s-page, .s-words, .s-check { padding-bottom: 1px; }
.s-lang { width: 231px; }
.s-pred { width: 219px; }
.s-lang, .s-pred, .s-focus-label { padding-top: 1px; color: #1f1f1f; }
.s-icon { width: 25px; height: 25px; }
.s-access { margin-left: 30px; }
.s-check { margin-left: 6px; width: 1034px; font-size: 18.05px; }
.s-focus-label { margin-left: 4px; width: 91px; }
.s-print { margin-left: 23px; width: 70px; height: 37px; background: #e0e0e0; display: flex; align-items: center; justify-content: center; }
.s-print svg { width: 20px; height: 26px; }
.s-web { margin-left: 22px; }
.minus { width: 14px; height: 2px; background: #333; margin-left: 34px; }
.slider { width: 173px; height: 3px; background: #666; margin-left: 10px; display: flex; align-items: center; justify-content: center; }
.slider b { width: 9px; height: 19px; background: #666; flex: none; }
.plus { width: 14px; height: 14px; margin-left: 9px; }
.s-zoom { margin-left: 23px; }
```
